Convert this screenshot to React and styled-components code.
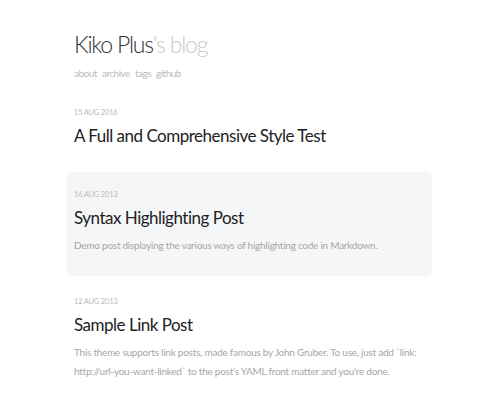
import React from 'react';
import styled, { createGlobalStyle } from 'styled-components';

const GlobalStyle = createGlobalStyle`
  html, body {
    margin: 0;
    padding: 0;
    background: #fff;
  }
  body {
    font-family: Lato, "Open Sans", sans-serif;
    -webkit-font-smoothing: antialiased;
  }
`;

const posts = [
  { date: '15 AUG 2016', title: 'A Full and Comprehensive Style Test' },
  {
    date: '16 AUG 2013',
    title: 'Syntax Highlighting Post',
    excerpt: 'Demo post displaying the various ways of highlighting code in Markdown.',
    active: true,
  },
  {
    date: '12 AUG 2013',
    title: 'Sample Link Post',
    excerpt:
      "This theme supports link posts, made famous by John Gruber. To use, just add `link: http://url-you-want-linked` to the post's YAML front matter and you're done.",
  },
];

const App = () => {
  return (
    <>
      <GlobalStyle />
      <Page>
        <Header>
          <BlogTitle>
            Kiko Plus<Faded>'s blog</Faded>
          </BlogTitle>
          <Nav>
            <a>about</a>
            <a>archive</a>
            <a>tags</a>
            <a>github</a>
          </Nav>
        </Header>
        <PostList>
          {posts.map((post) => (
            <PostCard key={post.title} $active={post.active}>
              <PostDate>{post.date}</PostDate>
              <PostTitle>{post.title}</PostTitle>
              {post.excerpt && <Excerpt>{post.excerpt}</Excerpt>}
            </PostCard>
          ))}
        </PostList>
      </Page>
    </>
  );
};

const Page = styled.div`
  width: 366px;
  margin: 0 0 0 66px;
  padding-top: 28px;
`;

const Header = styled.header`
  padding: 0 8px;
  margin-bottom: 9px;
`;

const BlogTitle = styled.h1`
  margin: 0;
  font-size: 23px;
  font-weight: 300;
  line-height: 32px;
  color: #333;
  letter-spacing: -1.2px;
`;

const Faded = styled.span`
  color: #c8c8c8;
`;

const Nav = styled.nav`
  display: flex;
  gap: 5px;
  margin-top: 5px;

  a {
    font-size: 10px;
    font-weight: 400;
    color: #bbb;
    line-height: 16px;
    letter-spacing: -0.5px;
  }
`;

const PostList = styled.div`
  display: flex;
  flex-direction: column;
  gap: 3px;
`;

const PostCard = styled.article`
  padding: 17px 8px 21px;
  border-radius: 5px;
  background: ${(p) => (p.$active ? '#f5f6f8' : 'transparent')};
`;

const PostDate = styled.div`
  font-size: 7.5px;
  color: #bbb;
  line-height: 12px;
  margin-bottom: 5px;
  letter-spacing: -0.2px;
`;

const PostTitle = styled.h2`
  margin: 0;
  font-size: 17px;
  font-weight: 400;
  line-height: 24px;
  color: #222;
  letter-spacing: -0.5px;
`;

const Excerpt = styled.p`
  margin: 6px 0 0;
  font-size: 10px;
  font-weight: 400;
  line-height: 19px;
  color: #a6a6a6;
  letter-spacing: -0.25px;
`;

export default App;
